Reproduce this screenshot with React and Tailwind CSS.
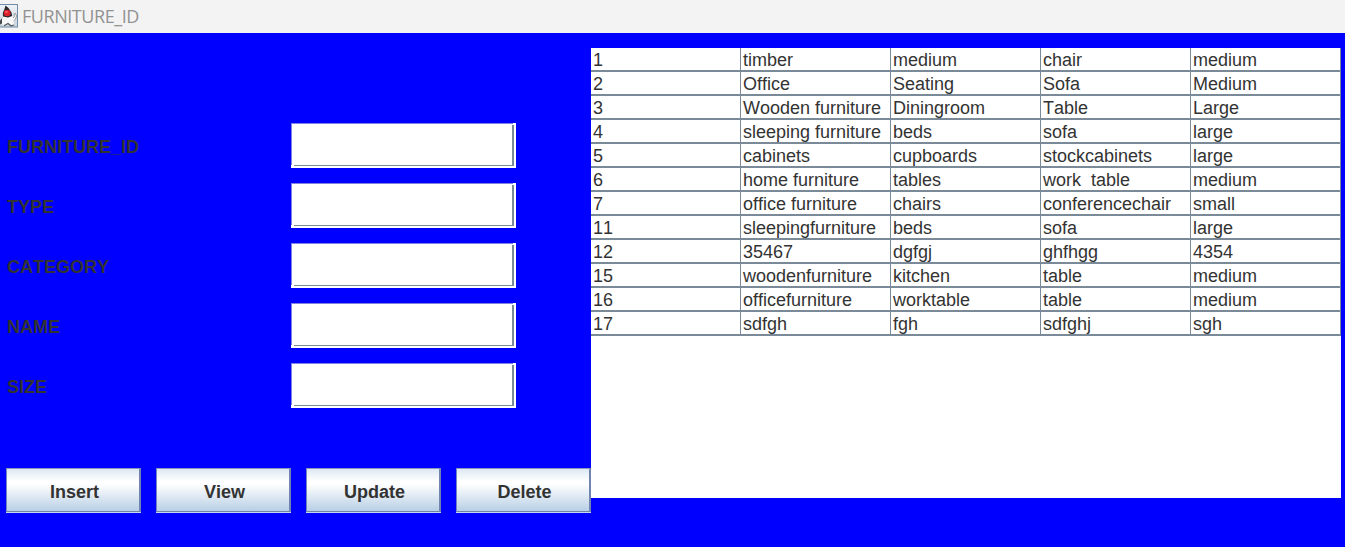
const ROWS = [
  ['1', 'timber', 'medium', 'chair', 'medium'],
  ['2', 'Office', 'Seating', 'Sofa', 'Medium'],
  ['3', 'Wooden furniture', 'Diningroom', 'Table', 'Large'],
  ['4', 'sleeping furniture', 'beds', 'sofa', 'large'],
  ['5', 'cabinets', 'cupboards', 'stockcabinets', 'large'],
  ['6', 'home furniture', 'tables', 'work  table', 'medium'],
  ['7', 'office furniture', 'chairs', 'conferencechair', 'small'],
  ['11', 'sleepingfurniture', 'beds', 'sofa', 'large'],
  ['12', '35467', 'dgfgj', 'ghfhgg', '4354'],
  ['15', 'woodenfurniture', 'kitchen', 'table', 'medium'],
  ['16', 'officefurniture', 'worktable', 'table', 'medium'],
  ['17', 'sdfgh', 'fgh', 'sdfghj', 'sgh'],
];

const FIELDS = ['FURNITURE_ID', 'TYPE', 'CATEGORY', 'NAME', 'SIZE'];
const ACTIONS = ['Insert', 'View', 'Update', 'Delete'];

function DukeIcon() {
  return (
    <svg width="18" height="25" viewBox="0 0 18 25" className="block shrink-0">
      <defs>
        <linearGradient id="tile" x1="0" y1="0" x2="0" y2="1">
          <stop offset="0" stopColor="#eef3f7" />
          <stop offset="1" stopColor="#c9d3dc" />
        </linearGradient>
      </defs>
      <rect x="-2" y="0.5" width="19.5" height="22.5" fill="url(#tile)" stroke="#6f8cab" />
      <path d="M3 13 L0 16.500 L0 20.500 L3 19 Z" fill="#45484c" />
      <path d="M12 15 L14.500 12.500 L14 10 L15.500 9.500 L16.500 12 L15.500 15 L13 17.500 Z" fill="#ffffff" stroke="#6e7175" strokeWidth="0.7" />
      <path d="M3 11 L11.500 10.500 L13.500 15 L13.800 21 L10.500 21.500 L8 19.500 L4.500 22 L2 20 L2 15 Z" fill="#f8f8f8" />
      <path d="M4 21.800 L8 19.500 L11 21.800 L14 21" fill="none" stroke="#55585c" strokeWidth="1.200" />
      <path d="M5.500 1.500 L8.500 4 L11.500 8.500 L12.200 12 L8 13.500 L3 12.500 L2.800 9 L4.500 5 Z" fill="#28282c" />
      <ellipse cx="7.200" cy="9" rx="3.400" ry="3.200" fill="#dc1f2a" />
      <ellipse cx="6.500" cy="8" rx="1.400" ry="1" fill="#f4656a" />
    </svg>
  );
}

function Field() {
  return (
    <div className="grid h-[45px] w-[225px] bg-white">
      <input
        aria-label="value"
        className="col-start-1 row-start-1 mr-[3px] mb-[3px] border-t border-l border-[#8080e0] bg-white outline-none"
      />
      <div className="pointer-events-none col-start-1 row-start-1 mt-[2px] mr-[2px] mb-[2px] ml-[3px] border-r-2 border-b border-[#7a8a99]" />
    </div>
  );
}

function ActionButton({ label }) {
  return (
    <button className="flex h-[45px] w-[135px] flex-col bg-[#c4d6f4]">
      <span className="flex h-[44px] w-full items-center justify-center border-t border-r-2 border-b border-l border-t-[#8795c0] border-r-[#7184b0] border-b-[#7184a8] border-l-[#7184c0] bg-[linear-gradient(to_bottom,#dde8f3_0%,#ffffff_30%,#ffffff_36%,#b8cfe5_100%)] pt-[3px] pl-[3px] text-[18px] leading-none font-bold text-[#333333]">
        {label}
      </span>
    </button>
  );
}

export default function App() {
  return (
    <div className="flex h-[547px] w-[1345px] flex-col overflow-hidden bg-[#0000ff] font-['Liberation_Sans',Arial,sans-serif] text-[#333333] [font-kerning:none]">
      <header className="flex h-[33px] shrink-0 items-start bg-[#f3f3f3] pt-[4px]">
        <DukeIcon />
        <h1 className="ml-[4px] font-['Open_Sans',sans-serif] text-[18px] leading-[25px] tracking-[-0.45px] text-[#929292]">FURNITURE_ID</h1>
      </header>
      <main className="flex flex-1">
        <section className="flex w-[591px] flex-col pt-[90px]">
          <div className="flex flex-col gap-[15px]">
            {FIELDS.map((name) => (
              <div key={name} className="flex h-[45px]">
                <label className="w-[291px] pt-[3px] pl-[7px] text-[18px] leading-[42px] font-bold">{name}</label>
                <Field />
              </div>
            ))}
          </div>
          <div className="mt-[60px] flex gap-[15px] pl-[6px]">
            {ACTIONS.map((label) => (
              <ActionButton key={label} label={label} />
            ))}
          </div>
        </section>
        <section className="mt-[15px] h-[450px] w-[750px] bg-white">
          {ROWS.map((row) => (
            <div key={row[0]} className="grid h-[24px] grid-cols-5 border-b-2 border-[#7a8a99]">
              {row.map((cell, i) => (
                <div key={i} className="overflow-hidden border-r border-[#7a8a99] pl-[2px] text-[18px] leading-[24px] whitespace-pre">
                  {cell}
                </div>
              ))}
            </div>
          ))}
        </section>
      </main>
    </div>
  );
}
